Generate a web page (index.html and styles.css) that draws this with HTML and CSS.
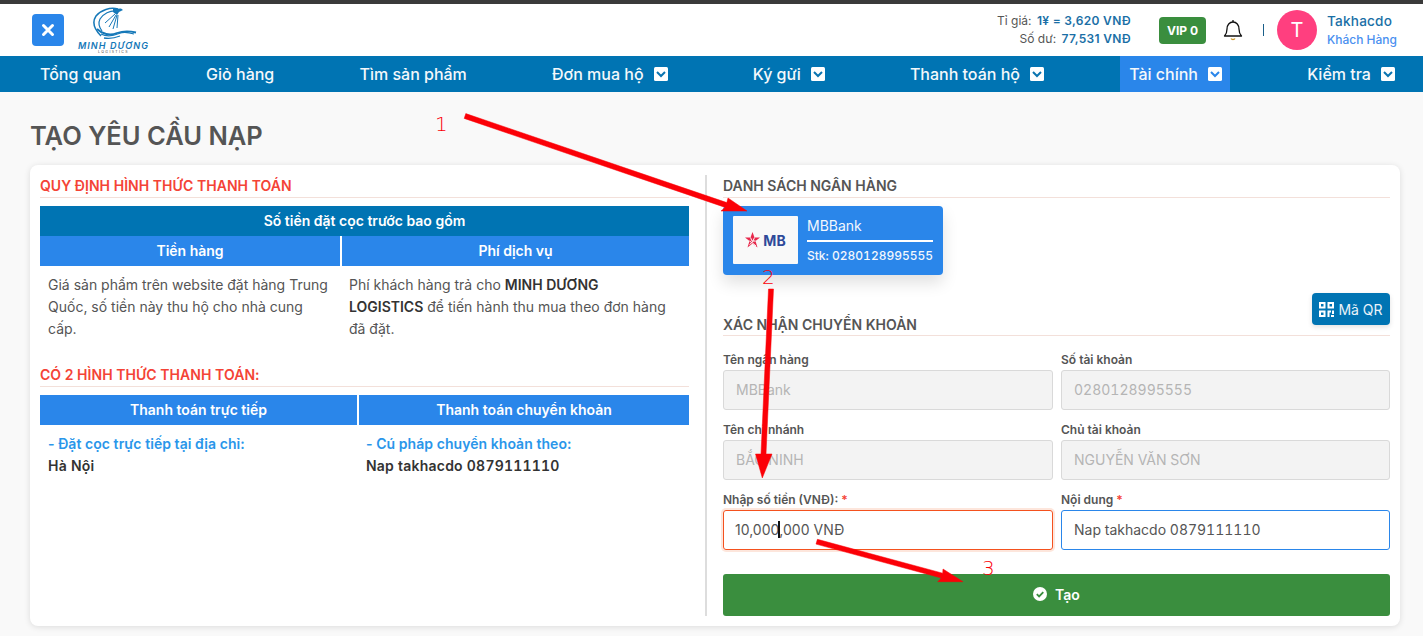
FILE: index.html
```html
<!DOCTYPE html>
<html lang="vi">
<head>
<meta charset="utf-8">
<title>Tạo yêu cầu nạp</title>
<link rel="stylesheet" href="styles.css">
</head>
<body>
<header class="topbar">
  <div class="brand">
    <button class="close-btn" aria-label="Đóng">
      <svg width="14" height="14" viewBox="0 0 14 14"><path d="M2.500 2.500l9 9M11.500 2.500l-9 9" stroke="#fff" stroke-width="3" stroke-linecap="round"/></svg>
    </button>
    <div class="logo">
      <svg class="logo-mark" width="50" height="33" viewBox="0 0 50 33" fill="none" stroke="#1578b8">
        <path d="M28 2C20 0 11 3 6 9 2 15 4 22 11 29" stroke-width="1.500"/>
        <path d="M27 4C20 3 13 7 10 12c-2 4-1 8 2 12" stroke-width="1.200"/>
        <path d="M23 2l8-.5 2 1.500-4 2-2 3-4-3z" fill="#1578b8" stroke="none"/>
        <path d="M25 7l-10 9M26 8l-7 12M27 8l-4 14M28 8l-1 13" stroke-width="1"/>
        <path d="M7 22c5 5 13 7 20 4 6-2 12-2 19-.5" stroke-width="1.800"/>
        <path d="M11 27c6 3 12 2 18-.5 5-2 10-1 15 .5" stroke-width="1.300"/>
        <path d="M14 31c6 1 11 0 16-2" stroke-width="1.300"/>
      </svg>
      <span class="logo-name">MINH DƯƠNG</span>
      <span class="logo-sub">LOGISTICS</span>
    </div>
  </div>
  <div class="account">
    <div class="balance">
      <div>Tỉ giá: <b>1¥ = 3,620 VNĐ</b></div>
      <div>Số dư: <b>77,531 VNĐ</b></div>
    </div>
    <span class="vip">VIP 0</span>
    <svg class="bell" width="20" height="22" viewBox="0 0 20 22" fill="none" stroke="#111" stroke-width="1.300">
      <path d="M1.500 17c2-2 2.500-3.500 2.500-7 0-4 2.500-7 6-7s6 3 6 7c0 3.500.5 5 2.500 7z" stroke-linejoin="round"/>
      <path d="M10 1v2"/>
      <path d="M8 19.500c.8 1.300 3.200 1.300 4 0" stroke="#c9962c"/>
    </svg>
    <span class="sep"></span>
    <span class="avatar">T</span>
    <div class="user">
      <div class="user-name">Takhacdo</div>
      <div class="user-role">Khách Hàng</div>
    </div>
  </div>
</header>

<nav class="nav">
  <a class="nav-item">Tổng quan</a>
  <a class="nav-item">Giỏ hàng</a>
  <a class="nav-item">Tìm sản phẩm</a>
  <a class="nav-item">Đơn mua hộ <svg class="caret" viewBox="0 0 14 14"><rect width="14" height="14" rx="1.500" fill="#fff"/><path d="M3 5l4 4 4-4" fill="none" stroke="#0b74b0" stroke-width="2"/></svg></a>
  <a class="nav-item">Ký gửi <svg class="caret" viewBox="0 0 14 14"><rect width="14" height="14" rx="1.500" fill="#fff"/><path d="M3 5l4 4 4-4" fill="none" stroke="#0b74b0" stroke-width="2"/></svg></a>
  <a class="nav-item">Thanh toán hộ <svg class="caret" viewBox="0 0 14 14"><rect width="14" height="14" rx="1.500" fill="#fff"/><path d="M3 5l4 4 4-4" fill="none" stroke="#0b74b0" stroke-width="2"/></svg></a>
  <a class="nav-item active">Tài chính <svg class="caret" viewBox="0 0 14 14"><rect width="14" height="14" rx="1.500" fill="#fff"/><path d="M3 5l4 4 4-4" fill="none" stroke="#2a86ea" stroke-width="2"/></svg></a>
  <a class="nav-item">Kiểm tra <svg class="caret" viewBox="0 0 14 14"><rect width="14" height="14" rx="1.500" fill="#fff"/><path d="M3 5l4 4 4-4" fill="none" stroke="#0b74b0" stroke-width="2"/></svg></a>
</nav>

<main class="page">
  <h1 class="page-title">TẠO YÊU CẦU NẠP</h1>
  <section class="card">
    <div class="col-left">
      <h2 class="sec-title red">QUY ĐỊNH HÌNH THỨC THANH TOÁN</h2>
      <div class="tbl-head">Số tiền đặt cọc trước bao gồm</div>
      <div class="tbl-cols first">
        <div class="tbl-sub">Tiền hàng</div>
        <div class="tbl-sub">Phí dịch vụ</div>
      </div>
      <div class="tbl-cols first body-row">
        <p class="cell">Giá sản phẩm trên website đặt hàng Trung Quốc, số tiền này thu hộ cho nhà cung cấp.</p>
        <p class="cell cell-right">Phí khách hàng trả cho <b>MINH DƯƠNG LOGISTICS</b> để tiến hành thu mua theo đơn hàng đã đặt.</p>
      </div>
      <h2 class="sec-title red second">CÓ 2 HÌNH THỨC THANH TOÁN:</h2>
      <div class="tbl-cols second-cols">
        <div class="tbl-sub">Thanh toán trực tiếp</div>
        <div class="tbl-sub">Thanh toán chuyển khoản</div>
      </div>
      <div class="tbl-cols second-cols">
        <div class="pay">
          <div class="pay-title">- Đặt cọc trực tiếp tại địa chỉ:</div>
          <div class="pay-value">Hà Nội</div>
        </div>
        <div class="pay pay-right">
          <div class="pay-title">- Cú pháp chuyển khoản theo:</div>
          <div class="pay-value">Nap takhacdo 0879111110</div>
        </div>
      </div>
    </div>

    <div class="col-right">
      <h2 class="sec-title">DANH SÁCH NGÂN HÀNG</h2>
      <div class="bank-row">
        <div class="bank">
          <div class="bank-logo">
            <svg width="15" height="16" viewBox="0 0 15 16">
              <path d="M7.500 0l2 5.500H15l-4.500 3.500 2 6.500-5-4-5 4 2-6.500L0 5.500h5.500z" fill="#e8294c"/>
              <path d="M5.500 5.500L7 9l3.500 0M9.500 5.500L7.500 10 4.500 12.500M4.500 9l3 2 3.500 3" fill="none" stroke="#f9f9f9" stroke-width="1"/>
            </svg>
            <span class="bank-logo-text">MB</span>
          </div>
          <div class="bank-info">
            <div class="bank-name">MBBank</div>
            <div class="bank-no">Stk: 0280128995555</div>
          </div>
        </div>
      </div>
      <div class="qr-row">
        <button class="qr-btn">
          <svg width="15" height="15" viewBox="0 0 15 15" fill="#fff">
            <path fill-rule="evenodd" d="M0 0h6.500v6.500H0zM2 2v2.500h2.500V2zM8.500 0H15v6.500H8.500zM10.500 2v2.500H13V2zM0 8.500h6.500V15H0zM2 10.500V13h2.500v-2.500zM8.500 8.500H12v2h-1.500V15h-2zM13 8.500h2V12h-2zM12 13h3v2h-3z"/>
          </svg>
          Mã QR
        </button>
      </div>
      <h2 class="sec-title confirm">XÁC NHẬN CHUYỂN KHOẢN</h2>
      <div class="form">
        <div class="field">
          <label class="lbl">Tên ngân hàng</label>
          <div class="inp off">MBBank</div>
        </div>
        <div class="field">
          <label class="lbl">Số tài khoản</label>
          <div class="inp off">0280128995555</div>
        </div>
        <div class="field">
          <label class="lbl">Tên chi nhánh</label>
          <div class="inp off">BẮC NINH</div>
        </div>
        <div class="field">
          <label class="lbl">Chủ tài khoản</label>
          <div class="inp off">NGUYỄN VĂN SƠN</div>
        </div>
        <div class="field">
          <label class="lbl">Nhập số tiền (VNĐ): <i>*</i></label>
          <div class="inp focus">10,000<span class="text-caret"></span>,000 VNĐ</div>
        </div>
        <div class="field">
          <label class="lbl">Nội dung <i>*</i></label>
          <div class="inp blue">Nap takhacdo 0879111110</div>
        </div>
      </div>
      <button class="submit">
        <svg width="14" height="14" viewBox="0 0 14 14"><circle cx="7" cy="7" r="7" fill="#fff"/><path d="M3.800 7.200l2.300 2.300 4.200-4.300" fill="none" stroke="#3a8e3e" stroke-width="1.800"/></svg>
        Tạo
      </button>
    </div>
  </section>
</main>

<svg class="marks" width="1423" height="636" viewBox="0 0 1423 636">
  <g fill="#fb0007" stroke="#fb0007" stroke-width=".5" stroke-linejoin="round">
    <path d="M465.800 113.600L726.800 202.600 728 198 747 211 721 211 725.200 207.400 464.200 118.400z"/>
    <path d="M768.500 289L773.500 289 766 454 772 454 762.300 478 755.500 454 761 454z"/>
    <path d="M817.400 539.300L942.700 573.200 943 569 963 581.700 937.700 581.700 941.300 578 816 544.100z"/>
  </g>
  <g class="mark-num">
    <text x="435" y="131">1</text>
    <text x="762" y="284">2</text>
    <text x="982" y="575">3</text>
  </g>
</svg>
</body>
</html>
```
FILE: styles.css
```css
* { box-sizing: border-box; }
html, body { margin: 0; padding: 0; }
body {
  width: 1423px;
  height: 636px;
  overflow: hidden;
  position: relative;
  background: #f9f9f9;
  font-family: Inter, "Noto Sans", sans-serif;
  color: #555;
  font-size: 14px;
}
.topbar {
  height: 56px;
  border-top: 4px solid #3a3a3a;
  background: #fff;
  display: flex;
  justify-content: space-between;
  align-items: center;
  padding: 0 26px 0 32px;
}
.brand { display: flex; align-items: center; gap: 14px; height: 100%; }
.close-btn {
  width: 32px;
  height: 32px;
  border: 0;
  padding: 0;
  border-radius: 4px;
  background: #2a86ea;
  display: flex;
  align-items: center;
  justify-content: center;
}
.logo {
  width: 71px;
  height: 100%;
  padding-top: 3px;
  display: flex;
  flex-direction: column;
  align-items: center;
  line-height: 1;
}
.logo-mark { display: block; margin-left: 2px; }
.logo-name {
  font-size: 9px;
  font-weight: 600;
  font-style: italic;
  letter-spacing: 1.100px;
  color: #1578b8;
  margin-top: 1px;
  white-space: nowrap;
}
.logo-sub { font-size: 3.500px; letter-spacing: 1.400px; color: #444; margin-top: 1px; }
.account { display: flex; align-items: center; }
.balance {
  text-align: right;
  font-size: 12px;
  line-height: 18px;
  color: #555;
}
.balance b { color: #1a6fa6; font-weight: 600; margin-left: 2px; letter-spacing: 0.300px; }
.vip {
  margin-left: 28px;
  width: 47px;
  height: 27px;
  border-radius: 4px;
  background: #3a8e3e;
  color: #fff;
  font-size: 12px;
  font-weight: 700;
  display: flex;
  align-items: center;
  justify-content: center;
}
.bell { margin-left: 17px; display: block; }
.sep { width: 1px; height: 12px; background: #1a5f8a; margin-left: 20px; }
.avatar {
  width: 40px;
  height: 40px;
  border-radius: 50%;
  background: #ff3f7f;
  color: #fff;
  font-size: 20px;
  display: flex;
  align-items: center;
  justify-content: center;
  margin-left: 13px;
}
.user { margin-left: 10px; }
.user-name { font-size: 13.600px; font-weight: 500; color: #1a6fa6; line-height: 20px; letter-spacing: 0.200px; }
.user-role { font-size: 12px; font-weight: 500; color: #4a90f0; line-height: 18px; }

.nav {
  height: 36px;
  background: #0074b3;
  display: flex;
  justify-content: space-between;
  padding: 0 20px 0 31px;
}
.nav-item {
  font-size: 16px;
  font-weight: 500;
  display: flex;
  align-items: center;
  gap: 10px;
  padding: 0 8px 0 9px;
  white-space: nowrap;
  color: #f4f8fb;
}
.nav-item.active { background: #2a86ea; }
.caret { width: 14px; height: 14px; display: block; }

.page { padding: 0 23px 0 30px; }
.page-title {
  margin: 0;
  padding-top: 29px;
  height: 73px;
  font-size: 25.500px;
  line-height: 30px;
  font-weight: 600;
  color: #555;
}
.card {
  height: 461px;
  background: #fff;
  border-radius: 8px;
  box-shadow: 0 1px 6px rgba(0,0,0,.12);
  display: flex;
  padding: 10px;
}
.col-left { width: 649px; }
.col-right {
  width: 685px;
  margin-left: 16px;
  border-left: 2px solid #ddd;
  padding-left: 16px;
}
.sec-title {
  margin: 0;
  height: 23px;
  border-bottom: 1px solid #f3e0da;
  font-size: 14px;
  line-height: 22px;
  font-weight: 600;
  color: #555;
  white-space: nowrap;
}
.sec-title.red { color: #f44336; letter-spacing: 0.050px; }
.sec-title.second { margin-top: 13px; }
.tbl-head {
  margin-top: 8px;
  height: 30px;
  padding-bottom: 2px;
  background: #0074b3;
  color: #fff;
  font-size: 14px;
  font-weight: 600;
  display: flex;
  align-items: center;
  justify-content: center;
}
.tbl-cols { display: grid; column-gap: 2px; }
.tbl-cols.first { grid-template-columns: 300px 347px; }
.tbl-cols.second-cols { grid-template-columns: 317px 330px; }
.tbl-sub {
  height: 30px;
  padding-bottom: 2px;
  background: #2a86ea;
  color: #fff;
  font-size: 14px;
  font-weight: 600;
  display: flex;
  align-items: center;
  justify-content: center;
}
.sec-title.second + .tbl-cols { margin-top: 8px; }
.cell {
  margin: 0;
  padding: 8px;
  line-height: 22px;
  font-size: 14px;
  color: #555;
}
.cell-right { padding: 8px 20px 8px 7px; }
.cell b { font-weight: 600; color: #333; }
.body-row { height: 85px; }
.pay { padding: 8px; line-height: 22px; }
.pay-right { padding-left: 7px; }
.pay-title { font-weight: 600; color: #2a96ea; font-size: 14px; letter-spacing: 0.060px; }
.pay-value {
  font-weight: 600;
  color: #333;
  font-size: 14px;
  font-variant-numeric: tabular-nums;
  letter-spacing: 0.220px;
}

.bank-row { margin-top: 8px; height: 87px; }
.bank {
  width: 220px;
  height: 69px;
  border-radius: 4px;
  background: #2a86ea;
  box-shadow: 0 8px 16px rgba(0,0,0,.12);
  padding: 10px;
  display: flex;
  gap: 9px;
  color: #f2f7fd;
}
.bank-logo {
  width: 65px;
  height: 48px;
  background: #f9f9f9;
  border-radius: 1px;
  display: flex;
  align-items: center;
  justify-content: center;
  gap: 3px;
}
.bank-logo-text { font-size: 14px; font-weight: 700; color: #2f4a9a; }
.bank-info { width: 126px; }
.bank-name {
  font-size: 14px;
  line-height: 20px;
  height: 26px;
  border-bottom: 2px solid #fff;
  margin-bottom: 6px;
}
.bank-no {
  font-size: 12px;
  line-height: 16px;
  font-weight: 500;
  white-space: nowrap;
  font-variant-numeric: tabular-nums;
}
.qr-row { display: flex; justify-content: flex-end; height: 32px; }
.qr-btn {
  width: 78px;
  height: 32px;
  border: 0;
  border-radius: 4px;
  background: #0074b3;
  box-shadow: 0 2px 5px rgba(0,0,0,.12);
  color: #e9f3f9;
  font: 400 14px Inter, sans-serif;
  display: flex;
  align-items: center;
  justify-content: center;
  gap: 4px;
  padding: 0;
}
.sec-title.confirm { margin-top: -11px; width: 667px; height: 22px; }
.form {
  display: grid;
  grid-template-columns: 330px 329px;
  column-gap: 8px;
  row-gap: 12px;
  margin-top: 16px;
  width: 667px;
}
.lbl {
  display: block;
  height: 18px;
  font-size: 12px;
  line-height: 16px;
  font-weight: 600;
  color: #555;
}
.lbl i { color: #f44336; font-style: normal; }
.inp {
  height: 40px;
  border-radius: 3px;
  border: 1px solid #d9d9d9;
  padding: 0 12px 2px;
  display: flex;
  align-items: center;
  font-size: 14px;
  font-variant-numeric: tabular-nums;
  white-space: nowrap;
}
.inp.off { background: #f3f3f3; color: #b5b5b5; }
.inp.focus {
  border-color: #f4511e;
  box-shadow: 0 0 0 2px #fde6dc;
  color: #555;
  font-variant-numeric: normal;
  padding-left: 11px;
}
.inp.blue { border-color: #2a86ea; color: #555; }
.text-caret { width: 2px; height: 17px; background: #111; margin: 0 -1px; }
.submit {
  width: 667px;
  height: 42px;
  margin-top: 24px;
  border: 0;
  border-radius: 3px;
  background: #3a8e3e;
  color: #fff;
  font: 600 14px Inter, sans-serif;
  display: flex;
  align-items: center;
  justify-content: center;
  gap: 8px;
  padding: 0 0 2px;
}
.marks { position: absolute; left: 0; top: 0; pointer-events: none; }
.mark-num { font: 200 20px "DejaVu Sans", sans-serif; fill: #fb0007; }
```
